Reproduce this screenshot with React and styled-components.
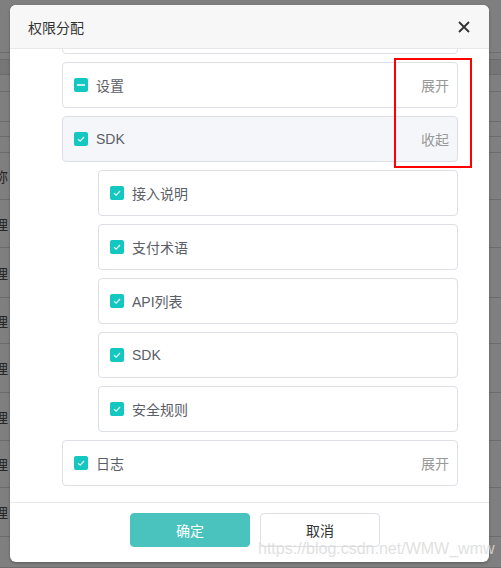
import styled, { createGlobalStyle } from 'styled-components'
import { useLayoutEffect, useRef } from 'react'

const GlobalStyle = createGlobalStyle`
  html, body {
    margin: 0;
    padding: 0;
  }
  body {
    font-family: "Liberation Sans", "Noto Sans CJK SC", sans-serif;
    background: #7f7f7f;
  }
`

const Page = styled.div`
  position: relative;
  width: 501px;
  height: 568px;
  overflow: hidden;
  background: #7f7f7f;
`

const Table = styled.div`
  display: flex;
  flex-direction: column;
`

const Row = styled.div`
  height: ${p => p.h}px;
  box-sizing: border-box;
  border-bottom: 1px solid #6c6c6c;
  background: ${p => (p.dark ? '#767676' : '#7f7f7f')};
  display: flex;
  align-items: center;
  font-size: 14px;
  color: #262626;
  overflow: hidden;
`

const RowText = styled.span`
  margin-left: -6px;
`

const Modal = styled.div`
  position: absolute;
  left: 10px;
  top: 5px;
  width: 479px;
  height: 557px;
  background: #fff;
  border-radius: 6px;
  box-shadow: 0 1px 3px rgba(0, 0, 0, 0.3);
  display: flex;
  flex-direction: column;
  overflow: hidden;
`

const Header = styled.div`
  height: 43px;
  flex-shrink: 0;
  background: #f7f7f7;
  border-bottom: 1px solid #e8e8e8;
  display: flex;
  align-items: center;
  justify-content: space-between;
  padding: 0 18px;
`

const Title = styled.span`
  font-size: 14px;
  color: #333;
`

const Close = styled.button`
  border: none;
  background: none;
  padding: 0;
  width: 14px;
  height: 14px;
  display: flex;
  align-items: center;
  justify-content: center;
  cursor: pointer;
`

const Body = styled.div`
  flex: 1;
  overflow: hidden;
`

const List = styled.div`
  display: flex;
  flex-direction: column;
  gap: 8px;
  padding: 8px 31px 16px 52px;
`

const Card = styled.div`
  height: 46px;
  box-sizing: border-box;
  margin-left: ${p => (p.child ? 36 : 0)}px;
  border: 1px solid #dcdfe6;
  border-radius: 4px;
  background: ${p => (p.active ? '#f5f6fa' : '#fff')};
  display: flex;
  align-items: center;
  gap: 8px;
  padding: 0 8px 0 11px;
`

const Box = styled.span`
  width: 14px;
  height: 14px;
  border-radius: 2px;
  background: #14c7c1;
  display: flex;
  align-items: center;
  justify-content: center;
  flex-shrink: 0;
`

const Label = styled.span`
  flex: 1;
  font-size: 14px;
  color: #5a5e66;
`

const Toggle = styled.span`
  font-size: 14px;
  color: #999;
`

const Footer = styled.div`
  flex-shrink: 0;
  border-top: 1px solid #e8e8e8;
  display: flex;
  justify-content: center;
  gap: 10px;
  padding: 10px 0 15px 11px;
`

const Button = styled.button`
  width: 120px;
  height: 34px;
  box-sizing: border-box;
  border-radius: 4px;
  font-family: inherit;
  font-size: 14px;
  cursor: pointer;
  border: 1px solid ${p => (p.primary ? '#4ac3be' : '#dcdfe6')};
  background: ${p => (p.primary ? '#4ac3be' : '#fff')};
  color: ${p => (p.primary ? '#fff' : '#333')};
`

const Highlight = styled.div`
  position: absolute;
  left: 394px;
  top: 58px;
  width: 78px;
  height: 110px;
  box-sizing: border-box;
  border: 2px solid #ff0000;
  pointer-events: none;
`

const Watermark = styled.div`
  position: absolute;
  left: 258px;
  top: 540px;
  font-family: "Liberation Sans", Arial, sans-serif;
  font-size: 16px;
  color: #dcdcdc;
  opacity: 0.85;
  white-space: nowrap;
  pointer-events: none;
`

const bgRows = [
  { h: 53 }, { h: 7 }, { h: 15, dark: true }, { h: 17 }, { h: 30 }, { h: 15 }, { h: 16 },
  { h: 47, t: '称' }, { h: 48, t: '理' }, { h: 50, t: '理' }, { h: 46, t: '理' },
  { h: 49, t: '理' }, { h: 48, t: '理' }, { h: 47, t: '理' }, { h: 49, t: '理' }, { h: 31 }
]

const items = [
  { label: '账户管理', state: 'checked', toggle: '展开' },
  { label: '用户管理', state: 'checked', toggle: '展开' },
  { label: '设置', state: 'partial', toggle: '展开' },
  { label: 'SDK', state: 'checked', toggle: '收起', active: true },
  { label: '接入说明', state: 'checked', child: true },
  { label: '支付术语', state: 'checked', child: true },
  { label: 'API列表', state: 'checked', child: true },
  { label: 'SDK', state: 'checked', child: true },
  { label: '安全规则', state: 'checked', child: true },
  { label: '日志', state: 'checked', toggle: '展开' }
]

const CheckBox = ({ state }) => (
  <Box>
    {state === 'partial' ? (
      <svg width="8" height="2" viewBox="0 0 8 2">
        <rect x="0" y="0" width="8" height="2" fill="rgba(255,255,255,0.75)" />
      </svg>
    ) : (
      <svg width="10" height="10" viewBox="0 0 10 10">
        <path d="M2 5.2 L4.2 7.2 L8 3" fill="none" stroke="rgba(255,255,255,0.85)" strokeWidth="1.3" />
      </svg>
    )}
  </Box>
)

export default function App() {
  const bodyRef = useRef(null)

  useLayoutEffect(() => {
    if (bodyRef.current) bodyRef.current.scrollTop = 104
  }, [])

  return (
    <Page>
      <GlobalStyle />
      <Table>
        {bgRows.map((r, i) => (
          <Row key={i} h={r.h} dark={r.dark}>
            {r.t && <RowText>{r.t}</RowText>}
          </Row>
        ))}
      </Table>

      <Modal>
        <Header>
          <Title>权限分配</Title>
          <Close aria-label="关闭">
            <svg width="12" height="12" viewBox="0 0 12 12">
              <path d="M1 1 L11 11 M11 1 L1 11" stroke="#333" strokeWidth="1.8" />
            </svg>
          </Close>
        </Header>

        <Body ref={bodyRef}>
          <List>
            {items.map((item, i) => (
              <Card key={i} child={item.child} active={item.active}>
                <CheckBox state={item.state} />
                <Label>{item.label}</Label>
                {item.toggle && <Toggle>{item.toggle}</Toggle>}
              </Card>
            ))}
          </List>
        </Body>

        <Footer>
          <Button primary>确定</Button>
          <Button>取消</Button>
        </Footer>
      </Modal>

      <Highlight />
      <Watermark>https://blog.csdn.net/WMW_wmw</Watermark>
    </Page>
  )
}
